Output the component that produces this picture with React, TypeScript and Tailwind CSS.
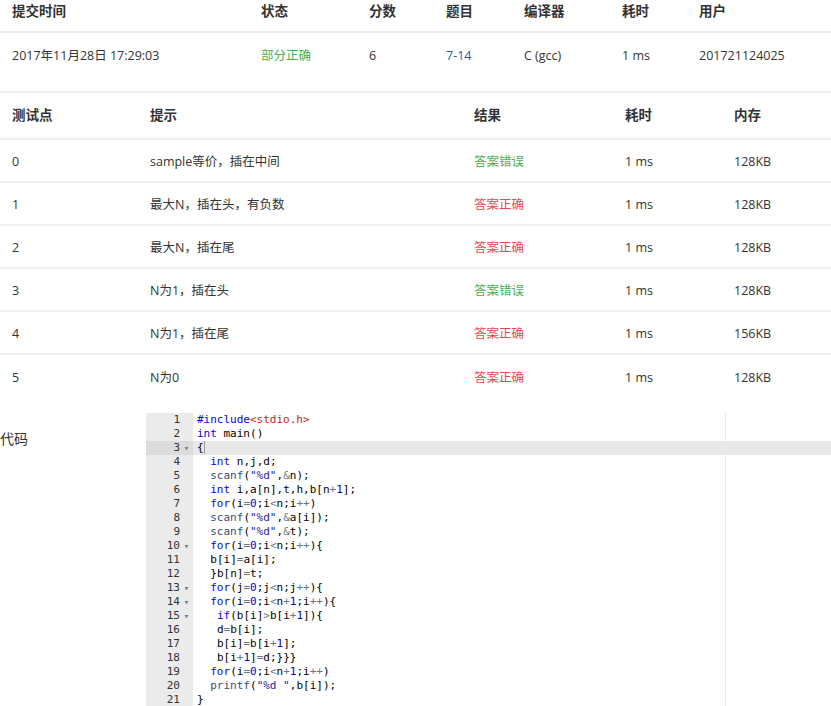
import React from "react"

const font = { fontFamily: '"Open Sans", "Noto Sans CJK SC", sans-serif' }

const summaryCols = "grid grid-cols-[249px_108px_77px_78px_98px_77px_1fr]"
const caseCols = "grid grid-cols-[138px_324px_151px_109px_1fr]"

const cases = [
    { id: "0", hint: "sample等价，插在中间", ok: false, time: "1 ms", mem: "128KB" },
    { id: "1", hint: "最大N，插在头，有负数", ok: true, time: "1 ms", mem: "128KB" },
    { id: "2", hint: "最大N，插在尾", ok: true, time: "1 ms", mem: "128KB" },
    { id: "3", hint: "N为1，插在头", ok: false, time: "1 ms", mem: "128KB" },
    { id: "4", hint: "N为1，插在尾", ok: true, time: "1 ms", mem: "156KB" },
    { id: "5", hint: "N为0", ok: true, time: "1 ms", mem: "128KB" },
]

const code = [
    "#include<stdio.h>",
    "int main()",
    "{",
    "  int n,j,d;",
    '  scanf("%d",&n);',
    "  int i,a[n],t,h,b[n+1];",
    "  for(i=0;i<n;i++)",
    '  scanf("%d",&a[i]);',
    '  scanf("%d",&t);',
    "  for(i=0;i<n;i++){",
    "  b[i]=a[i];",
    "  }b[n]=t;",
    "  for(j=0;j<n;j++){",
    "  for(i=0;i<n+1;i++){",
    "   if(b[i]>b[i+1]){",
    "   d=b[i];",
    "   b[i]=b[i+1];",
    "   b[i+1]=d;}}}",
    "  for(i=0;i<n+1;i++)",
    '  printf("%d ",b[i]);',
    "}",
]

const folds = [3, 10, 13, 14, 15]

// very small tokenizer, just enough for this snippet
const highlight = (line: string) => {
    const out: React.ReactNode[] = []
    const re = /(#include)|(<stdio\.h>)|("[^"]*")|\b(int|for|if)\b|\b(scanf|printf)\b|(\d+)|([=<>+&]+)|([A-Za-z_]\w*)|(\s+)|(.)/g
    let m: RegExpExecArray | null
    let k = 0
    while ((m = re.exec(line))) {
        const t = m[0]
        let cls = "text-black"
        if (m[1] || m[4]) cls = "text-[#0000ff]"
        else if (m[2]) cls = "text-[#c41a16]"
        else if (m[3]) cls = "text-[#1a1aa6]"
        else if (m[5]) cls = "text-[#3c4c72]"
        else if (m[6]) cls = "text-[#0000cd]"
        else if (m[7]) cls = "text-[#687687]"
        out.push(<span key={k++} className={cls}>{t}</span>)
    }
    return out
}

export default function App() {
    return (
        <div className="w-[831px] h-[706px] overflow-hidden bg-white text-[12.5px] text-[#333]" style={font}>
            {/* submission summary */}
            <div className={`${summaryCols} h-[33px] border-b-2 border-[#eee] font-bold text-[13.5px] leading-[22px]`}>
                {["提交时间", "状态", "分数", "题目", "编译器", "耗时", "用户"].map(h => (
                    <div key={h} className="pl-3">{h}</div>
                ))}
            </div>
            <div className={`${summaryCols} h-[60px] border-b-2 border-[#eee] pt-[14px] leading-[18px]`}>
                <div className="pl-3">2017年11月28日 17:29:03</div>
                <div className="pl-3 text-[#4caf50]">部分正确</div>
                <div className="pl-3">6</div>
                <div className="pl-3 text-[#205d9e]">7-14</div>
                <div className="pl-3">C (gcc)</div>
                <div className="pl-3">1 ms</div>
                <div className="pl-3">201721124025</div>
            </div>

            {/* test cases */}
            <div className={`${caseCols} h-[47px] items-center border-b-2 border-[#eee] font-bold text-[13.5px]`}>
                {["测试点", "提示", "结果", "耗时", "内存"].map(h => (
                    <div key={h} className="pl-3">{h}</div>
                ))}
            </div>
            {cases.map((c, i) => (
                <div
                    key={c.id}
                    className={`${caseCols} h-[43px] items-center pt-[3px] ${i < cases.length - 1 ? "border-b-2 border-[#f0f0f0]" : ""}`}
                >
                    <div className="pl-3">{c.id}</div>
                    <div className="pl-3">{c.hint}</div>
                    <div className={`pl-3 ${c.ok ? "text-[#e5484d]" : "text-[#4caf50]"}`}>{c.ok ? "答案正确" : "答案错误"}</div>
                    <div className="pl-3">{c.time}</div>
                    <div className="pl-3">{c.mem}</div>
                </div>
            ))}

            {/* source code */}
            <div className="flex mt-[15px]">
                <div className="w-[146px] shrink-0 pt-[16px] text-[14px] leading-[20px]">代码</div>
                <div className="flex-1 flex text-[11px] leading-[14px]" style={{ fontFamily: '"DejaVu Sans Mono", monospace' }}>
                    <div className="w-[47px] shrink-0 bg-[#ebebeb] text-[#333]">
                        {code.map((_, i) => (
                            <div key={i} className={`flex justify-end h-[14px] ${i === 2 ? "bg-[#dcdcdc]" : ""}`}>
                                <span>{i + 1}</span>
                                <span className="w-[13px] text-[9px] text-[#777] text-center">{folds.includes(i + 1) ? "▾" : ""}</span>
                            </div>
                        ))}
                    </div>
                    <div className="flex-1 relative">
                        <div className="absolute top-0 bottom-0 left-[532px] w-px bg-[#e8e8e8]" />
                        {code.map((line, i) => (
                            <div key={i} className={`relative h-[14px] pl-[4px] whitespace-pre ${i === 2 ? "bg-[#e8e8e8]" : ""}`}>
                                {highlight(line)}
                                {i === 2 && <span className="inline-block w-px h-[13px] align-top bg-[#999]" />}
                            </div>
                        ))}
                    </div>
                </div>
            </div>
        </div>
    )
}
